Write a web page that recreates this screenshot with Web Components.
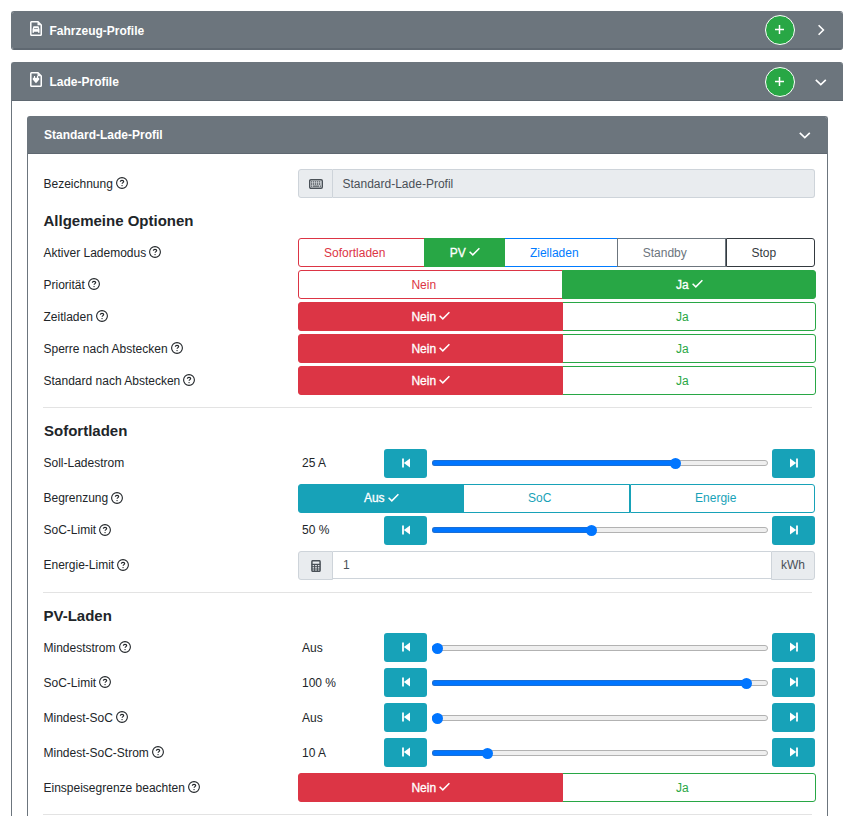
<!DOCTYPE html>
<html lang="de">
<head>
<meta charset="utf-8">
<title>Lade-Profile</title>
<style>
html,body{margin:0;height:816px;overflow:hidden;background:#fff}
body{font:12px/29px "Liberation Sans",Arial,sans-serif;color:#212529;padding:11px 0 0 11px;box-sizing:border-box}
.settings{--p:2px}
.high{--p:0px}
</style>
</head>
<body>
<profile-card heading="Fahrzeug-Profile" icon="car" add closed></profile-card>
<profile-card heading="Lade-Profile" icon="charge" add style="margin-top:12px">
  <profile-card class="settings" heading="Standard-Lade-Profil" inner>
    <config-row label="Bezeichnung" help><text-field icon="keyboard" value="Standard-Lade-Profil" readonly></text-field></config-row>
    <section-title>Allgemeine Optionen</section-title>
    <config-row label="Aktiver Lademodus" help><option-group>
      <option-button tone="red" style="width:127px">Sofortladen</option-button>
      <option-button tone="green" active style="width:81px">PV</option-button>
      <option-button tone="blue" style="width:114px">Zielladen</option-button>
      <option-button tone="gray" style="width:109px">Standby</option-button>
      <option-button tone="dark" style="width:89px;margin-left:0">Stop</option-button>
    </option-group></config-row>
    <config-row tight label="Priorität" help><option-group>
      <option-button tone="red" style="width:265px">Nein</option-button>
      <option-button tone="green" active style="width:254px">Ja</option-button>
    </option-group></config-row>
    <config-row tight label="Zeitladen" help><option-group>
      <option-button tone="red" active style="width:265px">Nein</option-button>
      <option-button tone="green" style="width:254px">Ja</option-button>
    </option-group></config-row>
    <config-row tight label="Sperre nach Abstecken" help><option-group>
      <option-button tone="red" active style="width:265px">Nein</option-button>
      <option-button tone="green" style="width:254px">Ja</option-button>
    </option-group></config-row>
    <config-row tight label="Standard nach Abstecken" help><option-group>
      <option-button tone="red" active style="width:265px">Nein</option-button>
      <option-button tone="green" style="width:254px">Ja</option-button>
    </option-group></config-row>
    <section-rule></section-rule>
    <section-title tall>Sofortladen</section-title>
    <config-row class="high" label="Soll-Ladestrom"><range-field value="25 A" fill="243"></range-field></config-row>
    <config-row class="high" wide label="Begrenzung" help><option-group>
      <option-button tone="teal" active style="width:166px">Aus</option-button>
      <option-button tone="teal" style="width:167px">SoC</option-button>
      <option-button tone="teal" style="width:185px;margin-left:0">Energie</option-button>
    </option-group></config-row>
    <config-row class="high" tight label="SoC-Limit" help><range-field value="50 %" fill="159"></range-field></config-row>
    <config-row class="high" wide label="Energie-Limit" help><text-field icon="calculator" value="1" unit="kWh"></text-field></config-row>
    <section-rule></section-rule>
    <section-title>PV-Laden</section-title>
    <config-row label="Mindeststrom" help><range-field value="Aus" fill="5"></range-field></config-row>
    <config-row wide label="SoC-Limit" help><range-field value="100 %" fill="314"></range-field></config-row>
    <config-row wide label="Mindest-SoC" help><range-field value="Aus" fill="5"></range-field></config-row>
    <config-row wide label="Mindest-SoC-Strom" help><range-field value="10 A" fill="55"></range-field></config-row>
    <config-row wide label="Einspeisegrenze beachten" help><option-group>
      <option-button tone="red" active style="width:265px">Nein</option-button>
      <option-button tone="green" style="width:254px">Ja</option-button>
    </option-group></config-row>
    <section-rule></section-rule>
  </profile-card>
</profile-card>
<script>
const svg=(w,h,body)=>`<svg width="${w}" height="${h}" viewBox="0 0 ${w} ${h}" fill="none" stroke="currentColor">${body}</svg>`;
const FILE='<path d="M1.5 .75H8L11.25 4v9.5a.8.8 0 0 1-.8.8H1.6a.8.8 0 0 1-.8-.8v-12a.75.75 0 0 1 .7-.75z" stroke-width="1.5"/><path d="M7.5 1v3.3H11z" fill="currentColor" stroke="none"/>';
const ICONS={
  car:svg(12,15,FILE+'<path d="M2.5 11.8V8.2l1-2.9h5l1 2.9v3.6H8v-1H4v1z" fill="currentColor" stroke="none"/><path d="M4.1 7.6h3.8" stroke="#6c757d" stroke-width=".8"/>'),
  charge:svg(12,15,FILE+'<path d="M4.5 4v2M7.5 4v2" stroke-width="1.1"/><path d="M2.8 5.8h6.4v1.6L7.6 9.4l-1.6 1.9-1.6-1.9-1.6-2z" fill="currentColor" stroke="none"/>'),
  help:svg(12,12,'<circle cx="6" cy="6" r="5.4" stroke-width="1.1"/><path d="M4.3 4.7c.1-1 .8-1.4 1.7-1.4s1.7.5 1.7 1.3c0 1-1.5 1.1-1.6 2.2" stroke-width="1.15"/><circle cx="6.05" cy="8.6" r=".7" fill="currentColor" stroke="none"/>'),
  check:svg(11,9,'<path d="M.6 4.7l3.2 3.2L10.4 1.2" stroke-width="1.5"/>'),
  keyboard:svg(14,10,'<rect x=".7" y=".7" width="12.6" height="8.6" rx="1.2" stroke-width="1.4"/><path d="M2 2.9h10M2 5h10" stroke-width="1.4" stroke-dasharray="1.4 .6"/><path d="M2 7.2h1.4M4 7.2h6M10.6 7.2H12" stroke-width="1.3"/>'),
  calculator:svg(10,12,'<rect x=".9" y=".7" width="8.2" height="10.6" rx="1" stroke-width="1.5"/><path d="M.8 4.4h8.4" stroke-width="1.3"/><path d="M1 6.7h8M1 9h8M3.6 5v6M6.4 5v6" stroke-width="1"/>'),
  plus:svg(9,9,'<path d="M4.5 0v9M0 4.5h9" stroke-width="1.5"/>'),
  right:svg(12,12,'<path d="M3.6 1.2L8.4 6l-4.8 4.8" stroke-width="1.6"/>'),
  down:svg(12,12,'<path d="M.8 3.9L5.8 8.7l5-4.8" stroke-width="1.6"/>'),
  back:svg(8,10,'<path d="M1 .6v8.8" stroke-width="1.8"/><path d="M8 .4v9.2L1.8 5z" fill="currentColor" stroke="none"/>'),
  fwd:svg(8,10,'<path d="M7 .6v8.8" stroke-width="1.8"/><path d="M0 .4v9.2L6.2 5z" fill="currentColor" stroke="none"/>')
};
const define=(name,render)=>customElements.define(name,class extends HTMLElement{
  connectedCallback(){
    if(this.shadowRoot)return;
    this.attachShadow({mode:'open'}).innerHTML='<style>*{box-sizing:border-box}svg{display:block;flex:none}</style>'+render(this);
  }
});
define('profile-card',e=>`<style>
:host{display:block;width:832px;box-sizing:border-box}
:host([inner]){width:801px;margin:15px 0 0 15px}
.card{border:1px solid #6c757d;border-right:0;border-radius:3px 3px 0 0;border-bottom:0;height:754px}
:host([inner]) .card{height:700px;border-right:1px solid #6c757d}
:host([closed]) .card{height:39px;border-radius:3px;border-bottom:1px solid #5f6871;overflow:hidden}
header{height:38px;background:#6c757d;border-bottom:1px solid #5f6871;border-radius:0 2px 0 0;color:#fff;font-weight:bold;display:flex;align-items:center;padding:0 16.5px 0 18px}
:host([inner]) header{height:37px;padding:0 16.5px 0 16px}
:host([closed]) header{height:37px;padding-right:16px}
.icon{margin:-4px 7.5px 0 0}
.title{flex:1;padding-top:2px}
:host([inner]) .title{padding-top:0}
.add{width:30px;height:30px;border-radius:50%;background:#28a745;border:1px solid #fff;display:grid;place-items:center;margin-right:19.5px;padding:0 1px 1px 0}
:host([closed]) .add{margin-right:20px}
:host([inner]) .body{padding:15px 12px 0 15px}
</style><div class="card"><header>${e.hasAttribute('icon')?`<span class="icon">${ICONS[e.getAttribute('icon')]}</span>`:''}<span class="title">${e.getAttribute('heading')}</span>${e.hasAttribute('add')?`<span class="add">${ICONS.plus}</span>`:''}${e.hasAttribute('closed')?ICONS.right:ICONS.down}</header><div class="body"><slot></slot></div></div>`);
define('config-row',e=>`<style>
:host{display:grid;grid-template-columns:255px 518px;grid-template-rows:29px;height:29px}
:host([tight]){margin-top:3px}:host([wide]){margin-top:6px}
.label{display:flex;align-items:center;gap:3px;padding-left:.5px;white-space:nowrap;height:29px}
.label span{padding-top:var(--p)}
svg{margin-bottom:1px}
</style><span class="label"><span>${e.getAttribute('label')}</span>${e.hasAttribute('help')?ICONS.help:''}</span><slot></slot>`);
define('section-title',()=>`<style>
:host{display:block;height:40px;padding:13px 0 0 .5px;line-height:20px;box-sizing:border-box;font-size:15px;font-weight:bold}
:host([tall]){height:41px;padding-left:1px}
</style><slot></slot>`);
define('section-rule',()=>`<style>:host{display:block;height:1px;width:769px;margin-top:12px;background:#e3e3e3}</style>`);
define('option-group',()=>`<style>:host{display:flex}::slotted(:first-child){border-radius:3px 0 0 3px;margin-left:0}::slotted(:last-child){border-radius:0 3px 3px 0}</style><slot></slot>`);
define('option-button',()=>`<style>
:host{display:flex;box-sizing:border-box;height:29px;align-items:center;justify-content:center;gap:3px;border:1px solid var(--c);color:var(--c);margin-left:-1px;line-height:27px;flex:none}
:host([tone=red]){--c:#dc3545}:host([tone=green]){--c:#28a745}:host([tone=blue]){--c:#007bff}:host([tone=gray]){--c:#6c757d}:host([tone=dark]){--c:#343a40}:host([tone=teal]){--c:#17a2b8}
:host([active]){background:var(--c);color:#fff;position:relative;z-index:1;-webkit-text-stroke:.3px #fff}
.text{padding:var(--p) 0 0 .5px}
svg{visibility:hidden;margin-bottom:2px}:host([active]) svg{visibility:visible}
</style><span class="text"><slot></slot></span>${ICONS.check}`);
define('range-field',e=>`<style>
:host{display:flex;align-items:center}
.value{width:86px;padding:var(--p) 0 0 4px}
.step{width:43px;height:29px;background:#17a2b8;color:#fff;border-radius:3px;display:grid;place-items:center;padding:0 0 1px 1px}
.track{width:336px;height:6px;margin:0 4px 0 5px;border:1px solid #b2b2b2;border-radius:3px;background:#efefef;position:relative;top:calc(var(--p) / 2 - .5px)}
.fill{position:absolute;left:-1px;top:-1px;height:6px;width:${e.getAttribute('fill')}px;background:#0075ff;border:1px solid #1a6fd6;border-right:0;border-radius:3px 0 0 3px}
.thumb{position:absolute;left:${e.getAttribute('fill')-6.5}px;top:-3.5px;width:11px;height:11px;border-radius:50%;background:#0075ff}
</style><span class="value">${e.getAttribute('value')}</span><span class="step">${ICONS.back}</span><span class="track"><span class="fill"></span><span class="thumb"></span></span><span class="step">${ICONS.fwd}</span>`);
define('text-field',e=>`<style>
:host{display:flex;width:517px;color:#495057}
.addon{width:35px;height:29px;display:grid;place-items:center;background:#e9ecef;border:1px solid #ced4da;border-radius:3px 0 0 3px;line-height:27px}
.box{flex:1;height:28px;border:solid #ced4da;border-width:1px 0;padding-left:10px;line-height:27px;background:#fff}
:host([readonly]) .box{height:29px;line-height:29px;border-right-width:1px;border-radius:0 3px 3px 0;background:#e9ecef;padding-left:9.5px}
.unit{width:44px;border-radius:0 3px 3px 0}
</style><span class="addon">${ICONS[e.getAttribute('icon')]}</span><span class="box">${e.getAttribute('value')}</span>${e.hasAttribute('unit')?`<span class="addon unit">${e.getAttribute('unit')}</span>`:''}`);
</script>
</body>
</html>
